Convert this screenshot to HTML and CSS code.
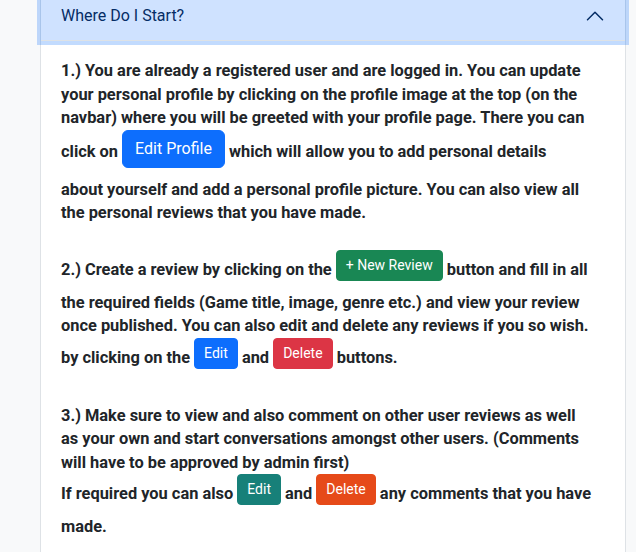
FILE: index.html
```html
<!DOCTYPE html>
<html lang="en">
<head>
<meta charset="utf-8">
<title>Where Do I Start?</title>
<link rel="stylesheet" href="styles.css">
</head>
<body>
<div class="page">
  <div class="acc-item">
    <h2 class="acc-header">
      <button class="acc-button" type="button">
        <span>Where Do I Start?</span>
        <svg class="chev" viewBox="0 0 16 16" width="20" height="20" fill="none" stroke="#052c65" stroke-width="1.2" stroke-linecap="round" stroke-linejoin="round"><path d="M2 11L8 5L14 11"/></svg>
      </button>
    </h2>
    <div class="acc-body">
      <p>1.) You are already a registered user and are logged in. You can update<br>
      your personal profile by clicking on the profile image at the top (on the<br>
      navbar) where you will be greeted with your profile page. There you can<br>
      click on <a class="btn btn-primary">Edit Profile</a> which will allow you to add personal details<br>
      about yourself and add a personal profile picture. You can also view all<br>
      the personal reviews that you have made.</p>
      <p>2.) Create a review by clicking on the <a class="btn btn-sm btn-success">+ New Review</a> button and fill in all<br>
      the required fields (Game title, image, genre etc.) and view your review<br>
      once published. You can also edit and delete any reviews if you so wish.<br>
      by clicking on the <a class="btn btn-sm btn-primary">Edit</a> and <a class="btn btn-sm btn-danger">Delete</a> buttons.</p>
      <p>3.) Make sure to view and also comment on other user reviews as well<br>
      as your own and start conversations amongst other users. (Comments<br>
      will have to be approved by admin first)<br>
      If required you can also <a class="btn btn-sm btn-teal">Edit</a> and <a class="btn btn-sm btn-orange">Delete</a> any comments that you have<br>
      made.</p>
    </div>
  </div>
</div>
</body>
</html>
```
FILE: styles.css
```css
html, body {
  margin: 0;
  padding: 0;
  background: #f8f9fa;
}
.page {
  padding-left: 40px;
}
.acc-item {
  width: 586px;
  box-sizing: border-box;
  background: #fff;
  border: 1px solid #dee2e6;
  border-top: 0;
  min-height: 560px;
}
.acc-header {
  margin: 0;
  position: relative;
  z-index: 1;
}
.acc-button {
  display: flex;
  align-items: center;
  justify-content: space-between;
  width: 100%;
  box-sizing: border-box;
  padding: 4px 20px 13px 20px;
  border: 0;
  background: #cfe2ff;
  color: #052c65;
  font-family: Roboto, "Liberation Sans", sans-serif;
  font-size: 16px;
  font-weight: 400;
  line-height: 24px;
  text-align: left;
  box-shadow: 0 0 0 4px rgba(13, 110, 253, 0.25), inset 0 -1px 0 #dee2e6;
}
.chev {
  display: block;
  flex-shrink: 0;
}
.acc-body {
  padding: 18px 12px 0 20px;
  color: #212529;
  font-family: Roboto, "Liberation Sans", sans-serif;
  font-size: 16.4px;
  font-weight: 700;
  line-height: 23.5px;
}
.acc-body p {
  margin: 0 0 25px 0;
}
.btn {
  display: inline-block;
  font-family: Roboto, "Liberation Sans", sans-serif;
  font-size: 16px;
  font-weight: 400;
  line-height: 24px;
  padding: 6px 12px;
  border: 1px solid transparent;
  border-radius: 6px;
  color: #fff;
  text-decoration: none;
  vertical-align: 3px;
  margin-bottom: 10px;
}
.btn-sm {
  font-size: 14px;
  line-height: 21px;
  padding: 4px 9px;
  border-radius: 4px;
  vertical-align: 5px;
}
.btn-primary { background: #0d6efd; border-color: #0d6efd; }
.btn-success { background: #198754; border-color: #198754; }
.btn-danger  { background: #dc3545; border-color: #dc3545; }
.btn-teal    { background: #178079; border-color: #178079; }
.btn-orange  { background: #e64a19; border-color: #e64a19; }
```
